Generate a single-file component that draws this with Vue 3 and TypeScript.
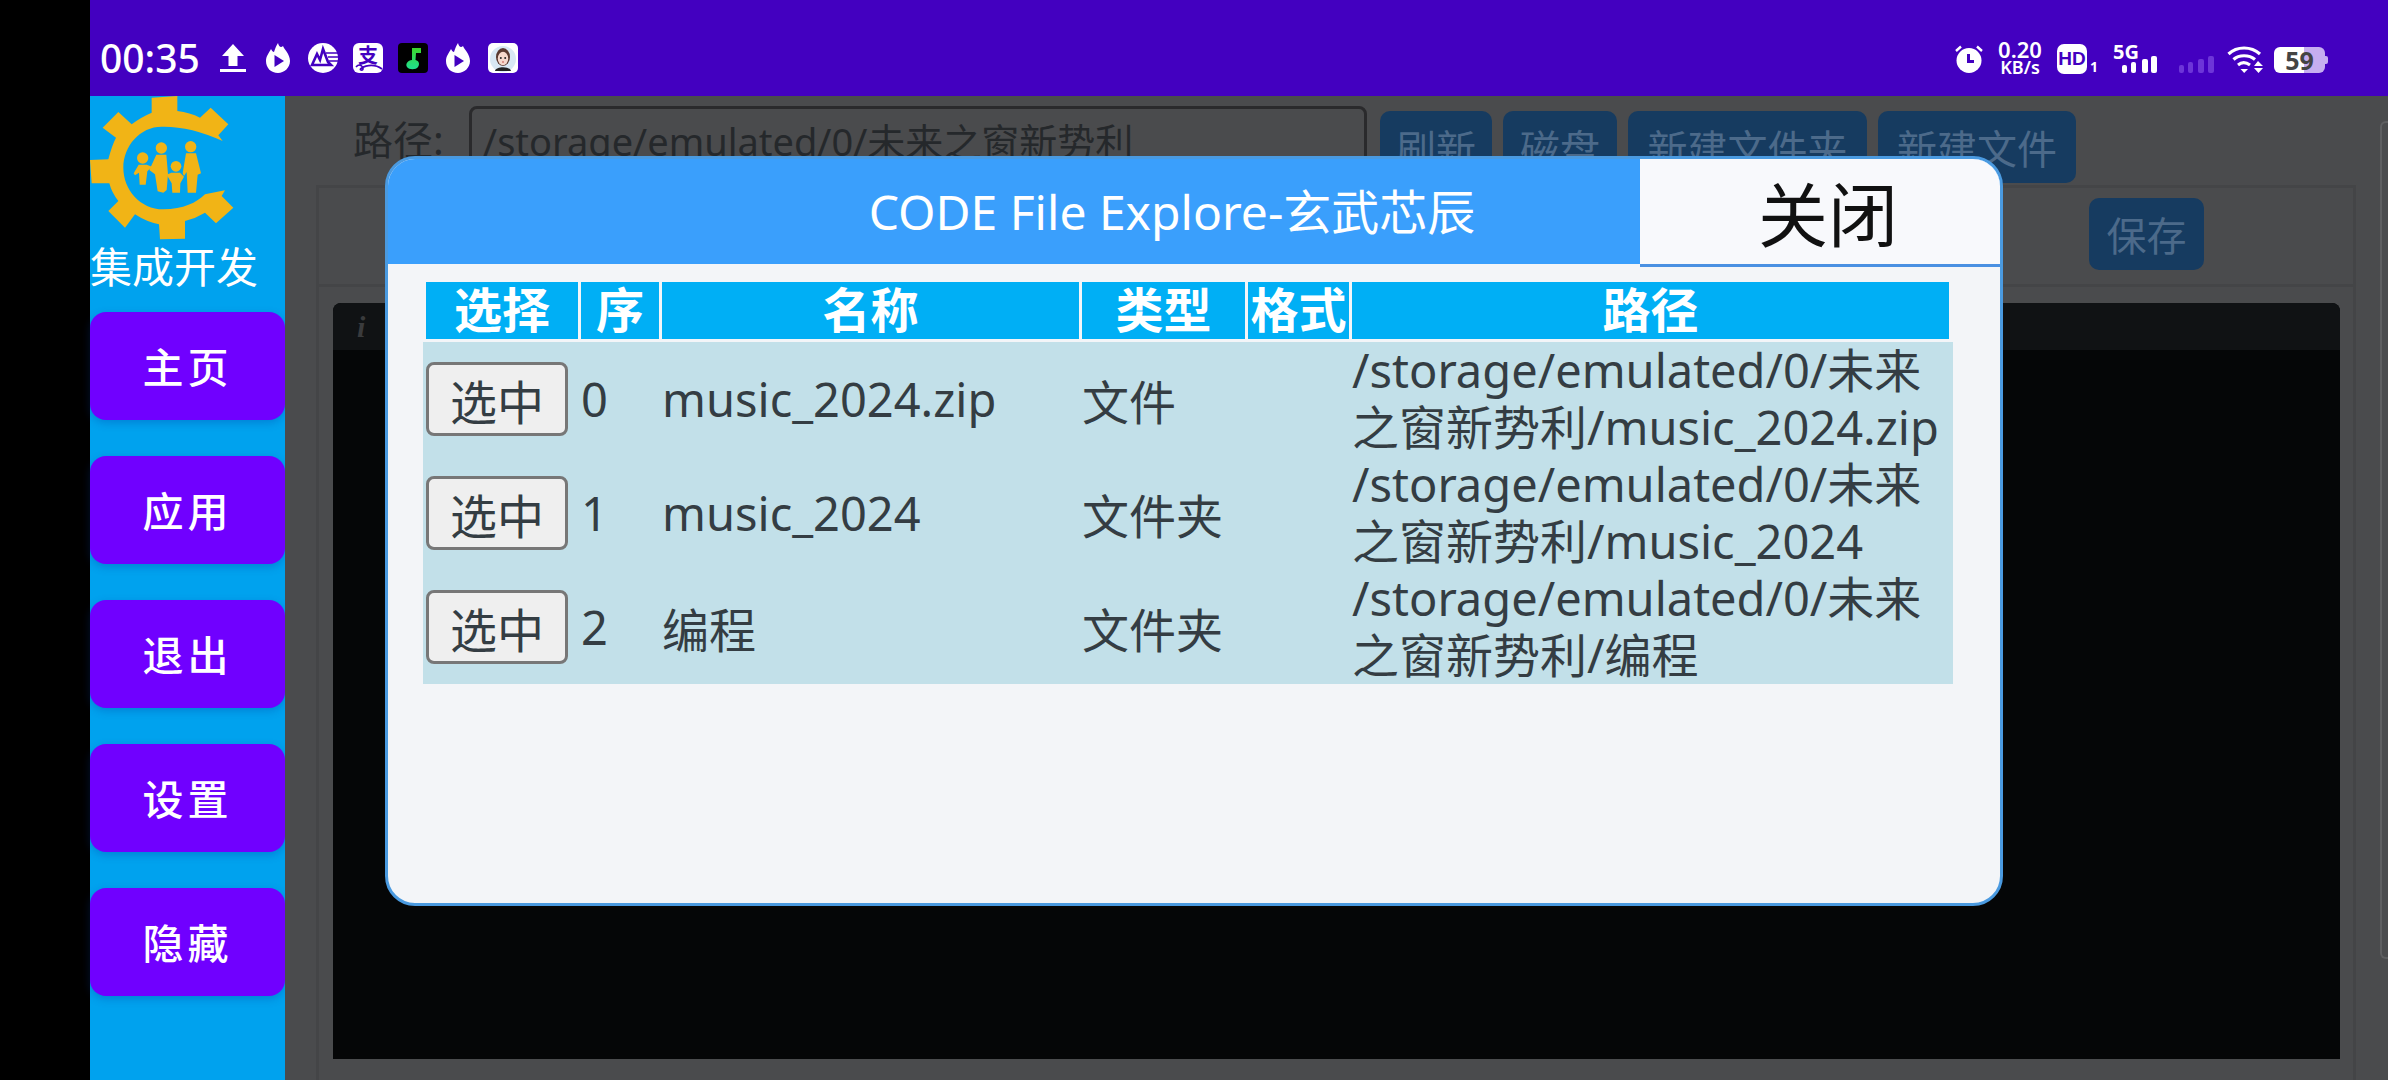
<template>
  <div class="screen">
    <div class="gutter"></div>
    <div class="device">
      <header class="statusbar">
        <div class="status-left">
          <span class="clock">00:35</span>
          <div class="notif-icons">
            <svg viewBox="0 0 30 30"><path d="M15 1 L26 13 H19.5 V23 H10.5 V13 H4 Z M2 26 H28 V29 H2 Z" fill="#fff" /></svg>
            <svg viewBox="0 0 30 30">
              <path d="M15 0 C16 4 18 5 20 3 C21 6 27 11 27 18 C27 25 21 30 15 30 C8 30 3 25 3 18 C3 13 6 10 8 6 C9 8 10 9 11 9 C12 6 13 3 15 0 Z" fill="#fff" />
              <path d="M11.5 12 L21 18 L11.5 24 Z" fill="#4300c0" />
            </svg>
            <svg viewBox="0 0 30 30">
              <circle cx="15" cy="15" r="15" fill="#fff" />
              <path d="M4 22 L9 11 L12 17 L15 6 L20 19 L23 22 Z" fill="none" stroke="#4300c0" stroke-width="2.6" />
              <path d="M18 10 H30 M20 14 H30 M21 18 H30" stroke="#4300c0" stroke-width="1.5" />
            </svg>
            <svg viewBox="0 0 30 30">
              <rect width="30" height="30" rx="6" fill="#fff" />
              <text x="15" y="20" text-anchor="middle" class="tile-text" font-size="20" fill="#4300c0">支</text>
              <path d="M3 24 C8 18 13 28 8 27 C4 26 18 18 29 26" fill="none" stroke="#4300c0" stroke-width="1.6" />
            </svg>
            <svg viewBox="0 0 30 30">
              <rect width="30" height="30" rx="4" fill="#000" />
              <path d="M14 5 H23 V10 H18 L17.5 17 C21 18 22 21 20 24 C18 27 11 27 9 24 C7 21 10 17 14 17 Z" fill="url(#note)" />
              <defs>
                <linearGradient id="note" x1="0" y1="0" x2="0" y2="1">
                  <stop offset="0" stop-color="#3cd42c" />
                  <stop offset="1" stop-color="#1fe090" />
                </linearGradient>
              </defs>
            </svg>
            <svg viewBox="0 0 30 30">
              <path d="M15 0 C16 4 18 5 20 3 C21 6 27 11 27 18 C27 25 21 30 15 30 C8 30 3 25 3 18 C3 13 6 10 8 6 C9 8 10 9 11 9 C12 6 13 3 15 0 Z" fill="#fff" />
              <path d="M11.5 12 L21 18 L11.5 24 Z" fill="#4300c0" />
            </svg>
            <svg viewBox="0 0 30 30">
              <rect width="30" height="30" rx="5" fill="#fff" />
              <circle cx="15" cy="16" r="13" fill="#d8e8f4" />
              <path d="M7 28 C8 23 22 23 23 28 Z" fill="#222" />
              <ellipse cx="15" cy="14" rx="7" ry="9" fill="#5a3a30" />
              <ellipse cx="15" cy="15.5" rx="5.2" ry="6.8" fill="#f6d8cc" />
              <circle cx="12.8" cy="15" r="1" fill="#222" />
              <circle cx="17.2" cy="15" r="1" fill="#222" />
              <path d="M14 19 H16" stroke="#c0504a" stroke-width="1" />
            </svg>
          </div>
        </div>
        <div class="status-right">
          <svg class="alarm" viewBox="0 0 28 28">
            <circle cx="14" cy="15.5" r="12.5" fill="#fff" />
            <path d="M1 6 L6 1.5 M27 6 L22 1.5" stroke="#fff" stroke-width="2.4" />
            <path d="M13.5 9 V16.5 H19" fill="none" stroke="#4300c0" stroke-width="3" />
          </svg>
          <div class="speed">
            <span class="speed-num">0.20</span>
            <span class="speed-unit">KB/s</span>
          </div>
          <div class="hd">
            <span class="hd-tile">HD</span>
            <span class="hd-sim">1</span>
          </div>
          <div class="signal">
            <span class="signal-5g">5G</span>
            <svg viewBox="0 0 101 30" class="signal-bars">
              <rect x="9" y="21" width="5" height="8" rx="2" fill="#fff" />
              <rect x="18" y="18" width="5" height="11" rx="2" fill="#fff" />
              <rect x="29" y="15" width="6" height="14" rx="2" fill="#fff" />
              <rect x="38" y="12" width="6" height="17" rx="2" fill="#fff" />
              <rect x="66" y="21" width="5" height="8" rx="2" fill="#6d35d8" />
              <rect x="75" y="18" width="5" height="11" rx="2" fill="#6d35d8" />
              <rect x="85" y="15" width="6" height="14" rx="2" fill="#6d35d8" />
              <rect x="95" y="12" width="6" height="17" rx="2" fill="#6d35d8" />
            </svg>
          </div>
          <svg class="wifi" viewBox="0 0 37 28">
            <path d="M1.5 9 C10 1 24 1 33 9" fill="none" stroke="#fff" stroke-width="3.2" />
            <path d="M6.5 14.5 C12 9.5 22 9.5 28 14.5" fill="none" stroke="#fff" stroke-width="3.2" />
            <path d="M11 20 C14.5 17 19 17 23 20" fill="none" stroke="#fff" stroke-width="3" />
            <path d="M13.5 24 H21 L17.2 28 Z" fill="#fff" />
            <path d="M31 16 L36 21 H27 Z M27 23 H36 L31.5 28 Z" fill="#fff" />
          </svg>
          <div class="battery">
            <span class="battery-level">59</span>
          </div>
        </div>
      </header>

      <div class="body">
        <aside class="sidebar">
          <svg class="logo" viewBox="0 0 480 450">
            <path
              d="M185 5 L262 0 L262 45 Q300 50 330 65 L362 35 L415 85 L385 118 L398 135 Q300 90 215 92 C150 92 100 150 100 215 C100 280 150 340 220 340 C280 340 320 320 345 295 L405 283 L395 300 L430 335 L378 382 L345 350 Q315 368 285 375 L285 428 L210 430 L207 385 Q170 378 135 355 L105 395 L55 345 L85 315 Q65 290 58 262 L5 262 L0 192 L55 190 Q65 150 78 125 L38 95 L85 48 L125 85 Q150 65 185 50 Z"
              fill="#f1b416"
            />
            <g fill="#f1b416">
              <circle cx="158" cy="186" r="17" />
              <path d="M146 206 H170 L186 212 L172 226 L167 266 H149 L147 230 L135 238 L131 232 Z" />
              <circle cx="214" cy="156" r="17" />
              <path d="M199 176 H229 L234 235 L230 282 L220 290 L203 286 L195 235 L178 222 Z" />
              <circle cx="258" cy="211" r="16" />
              <path d="M244 230 H270 L282 242 L271 262 L270 290 H247 L245 262 L230 236 Z" />
              <circle cx="302" cy="152" r="17" />
              <path d="M288 172 H318 L333 232 L323 236 L318 290 H293 L290 228 L282 240 L278 232 Z" />
            </g>
          </svg>
          <div class="brand">集成开发</div>
          <nav class="nav">
            <button v-for="item in navItems" :key="item" class="nav-btn">{{ item }}</button>
          </nav>
        </aside>

        <main class="content">
          <div class="workspace">
            <div class="pathbar">
              <label class="path-label">路径:</label>
              <div class="path-input">/storage/emulated/0/未来之窗新势利</div>
              <div class="path-actions">
                <button v-for="a in pathActions" :key="a.label" class="dim-btn" :style="{ width: a.width + 'px' }">{{ a.label }}</button>
              </div>
            </div>
            <section class="editor">
              <div class="editor-bar">
                <button class="dim-btn save-btn">保存</button>
              </div>
              <div class="terminal">
                <div class="terminal-head"><i>i</i></div>
              </div>
            </section>
          </div>
          <div class="rail"></div>
        </main>
      </div>
    </div>

    <div class="modal">
      <div class="modal-head">
        <div class="modal-title">CODE File Explore-玄武芯辰</div>
        <button class="modal-close">关闭</button>
      </div>
      <div class="file-table">
        <div class="file-row file-head">
          <span v-for="h in columns" :key="h">{{ h }}</span>
        </div>
        <div class="file-list">
          <div v-for="(f, i) in files" :key="f.name" class="file-row">
            <span class="cell"><button class="pick">选中</button></span>
            <span class="cell">{{ i }}</span>
            <span class="cell">{{ f.name }}</span>
            <span class="cell">{{ f.type }}</span>
            <span class="cell"></span>
            <span class="cell path-cell">
              <span v-for="line in f.path" :key="line">{{ line }}</span>
            </span>
          </div>
        </div>
      </div>
    </div>
  </div>
</template>

<script setup lang="ts">
interface FileItem {
  name: string
  type: string
  path: string[]
}

const navItems = ['主页', '应用', '退出', '设置', '隐藏']

const pathActions = [
  { label: '刷新', width: 112 },
  { label: '磁盘', width: 114 },
  { label: '新建文件夹', width: 239 },
  { label: '新建文件', width: 198 }
]

const columns = ['选择', '序', '名称', '类型', '格式', '路径']

const files: FileItem[] = [
  { name: 'music_2024.zip', type: '文件', path: ['/storage/emulated/0/未来', '之窗新势利/music_2024.zip'] },
  { name: 'music_2024', type: '文件夹', path: ['/storage/emulated/0/未来', '之窗新势利/music_2024'] },
  { name: '编程', type: '文件夹', path: ['/storage/emulated/0/未来', '之窗新势利/编程'] }
]
</script>

<style>
html,
body {
  margin: 0;
  background: #000;
}
</style>

<style scoped>
.screen {
  position: relative;
  display: flex;
  width: 2388px;
  height: 1080px;
  overflow: hidden;
  font-family: "Noto Sans", "Noto Sans CJK SC", sans-serif;
}
.gutter {
  width: 90px;
  flex: none;
  background: #000;
}
.device {
  flex: 1;
  display: flex;
  flex-direction: column;
  min-width: 0;
}

/* status bar */
.statusbar {
  height: 96px;
  flex: none;
  box-sizing: border-box;
  padding: 42px 60px 0 10px;
  display: flex;
  justify-content: space-between;
  align-items: flex-start;
  background: #4300c0;
  color: #fff;
}
.status-left {
  display: flex;
  align-items: center;
  height: 32px;
}
.clock {
  width: 118px;
  font-size: 39px;
  font-weight: 500;
  line-height: 32px;
}
.notif-icons {
  display: flex;
  gap: 15px;
}
.notif-icons svg {
  width: 30px;
  height: 30px;
}
.tile-text {
  font-family: "Noto Sans CJK SC", sans-serif;
  font-weight: 700;
}
.status-right {
  display: flex;
  align-items: flex-start;
  gap: 13px;
}
.alarm {
  width: 28px;
  height: 28px;
  margin-top: 3px;
}
.speed {
  width: 48px;
  display: flex;
  flex-direction: column;
  align-items: center;
  margin-top: -2px;
  font-weight: 600;
  line-height: 18px;
}
.speed-num {
  font-size: 22px;
}
.speed-unit {
  font-size: 18px;
}
.hd {
  display: flex;
  align-items: flex-end;
  gap: 3px;
  margin-top: 2px;
}
.hd-tile {
  width: 30px;
  height: 30px;
  border-radius: 7px;
  background: #fff;
  color: #4300c0;
  font-family: "Liberation Sans", sans-serif;
  font-size: 19px;
  font-weight: 700;
  line-height: 30px;
  text-align: center;
}
.hd-sim {
  font-size: 14px;
  font-weight: 700;
  line-height: 15px;
}
.signal {
  position: relative;
  width: 101px;
  height: 32px;
  margin-left: 2px;
}
.signal-5g {
  position: absolute;
  left: 0;
  top: 1px;
  font-size: 20px;
  font-weight: 700;
  line-height: 17px;
}
.signal-bars {
  display: block;
  width: 101px;
  height: 30px;
  margin-top: 2px;
}
.wifi {
  width: 37px;
  height: 28px;
  margin: 3px -3px 0 0;
}
.battery {
  position: relative;
  width: 51px;
  height: 26px;
  margin-top: 5px;
  margin-right: 3px;
  border-radius: 6px;
  background: linear-gradient(to right, #fff 59%, #c6aef0 59%);
  color: #444;
  font-size: 25px;
  font-weight: 700;
  line-height: 26px;
  text-align: center;
}
.battery::after {
  content: "";
  position: absolute;
  right: -3px;
  top: 9px;
  width: 3px;
  height: 8px;
  border-radius: 0 2px 2px 0;
  background: #c6aef0;
}

/* sidebar */
.body {
  flex: 1;
  display: flex;
  min-height: 0;
}
.sidebar {
  width: 195px;
  flex: none;
  display: flex;
  flex-direction: column;
  background: #00a2ee;
}
.logo {
  display: block;
  width: 160px;
  height: 150px;
}
.brand {
  margin-top: -1px;
  color: #fff;
  font-size: 42px;
  line-height: 44px;
  white-space: nowrap;
}
.nav {
  display: flex;
  flex-direction: column;
  gap: 36px;
  margin-top: 23px;
}
.nav-btn {
  height: 108px;
  border: 0;
  padding: 0 0 3px;
  border-radius: 16px;
  background: #7000ff;
  box-shadow: 0 3px 8px rgba(0, 60, 160, 0.3);
  color: #fff;
  font-family: inherit;
  font-size: 41px;
  font-weight: 500;
  letter-spacing: 4px;
}

/* page behind the dialog, already dimmed */
.content {
  flex: 1;
  display: flex;
  min-width: 0;
  background: #4a4b4d;
}
.workspace {
  flex: 1;
  display: flex;
  flex-direction: column;
  min-width: 0;
}
.rail {
  width: 8px;
  flex: none;
  height: 838px;
  margin-top: 25px;
  border: solid #5d5e60;
  border-width: 2px 0 2px 2px;
  border-radius: 6px 0 0 6px;
  box-sizing: border-box;
}
.pathbar {
  display: flex;
  height: 89px;
  flex: none;
  padding: 10px 0 0 68px;
  box-sizing: border-box;
  color: #25282b;
}
.path-label {
  width: 116px;
  flex: none;
  font-size: 40px;
  line-height: 68px;
}
.path-input {
  width: 898px;
  height: 100px;
  flex: none;
  box-sizing: border-box;
  padding-left: 11px;
  border: 3px solid #2a2a2c;
  border-radius: 8px;
  font-size: 38px;
  line-height: 64px;
}
.path-actions {
  display: flex;
  gap: 11px;
  margin: 5px 0 0 13px;
}
.dim-btn {
  height: 72px;
  border: 0;
  padding: 0;
  border-radius: 10px;
  background: #163b60;
  color: #4c6a8a;
  font-family: inherit;
  font-size: 40px;
}
.editor {
  flex: 1;
  display: flex;
  flex-direction: column;
  margin: 0 24px 0 31px;
  border: solid #444547;
  border-width: 3px 3px 0;
  min-height: 0;
}
.editor-bar {
  height: 99px;
  flex: none;
  display: flex;
  justify-content: flex-end;
  box-sizing: border-box;
  padding: 10px 149px 0 0;
  border-bottom: 3px solid #444547;
}
.save-btn {
  width: 115px;
}
.terminal {
  flex: 1;
  margin: 16px 13px 21px 14px;
  border-radius: 8px 8px 0 0;
  background: #050607;
}
.terminal-head {
  height: 47px;
  box-sizing: border-box;
  padding-left: 24px;
  border-radius: 8px 8px 0 0;
  background: #101214;
  color: #3a3b3d;
  font-family: "Liberation Serif", serif;
  font-size: 30px;
  font-weight: 700;
  line-height: 47px;
}

/* dialog */
.modal {
  position: absolute;
  left: 385px;
  top: 156px;
  width: 1618px;
  height: 750px;
  box-sizing: border-box;
  overflow: hidden;
  border: 3px solid #4a9ae0;
  border-radius: 30px;
  background: #f3f5f8;
  color: #343d43;
  font-size: 47px;
}
.modal-head {
  display: flex;
  align-items: flex-start;
  height: 105px;
  background: #3a9ffc;
}
.modal-title {
  flex: 1;
  box-sizing: border-box;
  padding-left: 316px;
  color: #fff;
  font-size: 48px;
  line-height: 105px;
  text-align: center;
  white-space: nowrap;
}
.modal-close {
  width: 360px;
  height: 108px;
  box-sizing: border-box;
  border: 0;
  border-bottom: 3px solid #4a90e2;
  padding: 0 0 0 16px;
  background: #f8f9fc;
  color: #111;
  font-family: inherit;
  font-size: 70px;
}
.file-table {
  width: 1530px;
  margin: 18px 0 0 35px;
}
.file-row {
  display: grid;
  grid-template-columns: 152px 78px 417px 163px 101px 597px;
  column-gap: 3px;
  padding: 0 3px;
  height: 114px;
}
.file-head {
  height: 57px;
  margin-bottom: 3px;
  color: #fff;
  font-size: 48px;
  font-weight: 700;
  line-height: 55px;
  text-align: center;
}
.file-head span {
  background: #00aff5;
}
.file-list {
  background: #c2e0e9;
}
.cell {
  display: flex;
  align-items: center;
  white-space: nowrap;
}
.path-cell {
  flex-direction: column;
  align-items: flex-start;
  justify-content: center;
  line-height: 57px;
}
.pick {
  width: 142px;
  height: 74px;
  box-sizing: border-box;
  border: 3px solid #777;
  border-radius: 8px;
  padding: 0 0 3px;
  background: #efefef;
  color: #343d43;
  font-family: inherit;
  font-size: 47px;
}
</style>
